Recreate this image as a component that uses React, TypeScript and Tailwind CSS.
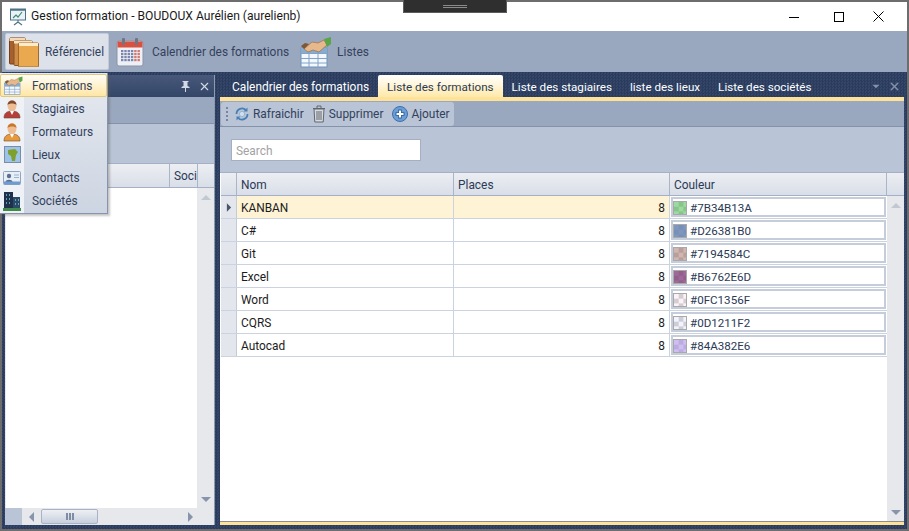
import type { ReactNode } from "react";
import { X } from "lucide-react";

const formations = [
  { name: "KANBAN", places: 8, color: "#7B34B13A" },
  { name: "C#", places: 8, color: "#D26381B0" },
  { name: "Git", places: 8, color: "#7194584C" },
  { name: "Excel", places: 8, color: "#B6762E6D" },
  { name: "Word", places: 8, color: "#0FC1356F" },
  { name: "CQRS", places: 8, color: "#0D1211F2" },
  { name: "Autocad", places: 8, color: "#84A382E6" },
];

const tabs = ["Calendrier des formations", "Liste des formations", "Liste des stagiaires", "liste des lieux", "Liste des sociétés"];

// #AARRGGBB over a white / grey checker
function blend(hex: string, under: number) {
  const a = parseInt(hex.slice(1, 3), 16) / 255;
  const mix = (i: number) => Math.round(parseInt(hex.slice(i, i + 2), 16) * a + under * (1 - a));
  return `rgb(${mix(3)},${mix(5)},${mix(7)})`;
}

function Swatch({ color }: { color: string }) {
  const on = blend(color, 255);
  const off = blend(color, 215);
  return (
    <span
      className="w-[14px] h-[14px] border border-[#a9a9a9] shrink-0"
      style={{ background: `repeating-conic-gradient(${off} 0% 25%, ${on} 0% 50%) 0 0 / 9.4px 9.4px` }}
    />
  );
}

function AppIcon() {
  return (
    <svg width="18" height="18" viewBox="0 0 18 18">
      <rect x="1.5" y="2" width="15" height="10" fill="#eaf2f6" stroke="#4f7386" />
      <path d="M1 1.5h16" stroke="#4f7386" strokeWidth="2" />
      <path d="M4 10l3-3 2 2 4-5" fill="none" stroke="#3e8a7a" strokeWidth="1.2" />
      <path d="M9 12v3M5 17l4-3 4 3" fill="none" stroke="#4f7386" strokeWidth="1.2" />
    </svg>
  );
}

function BooksIcon() {
  return (
    <svg width="30" height="30" viewBox="0 0 30 30">
      <rect x="0.5" y="1" width="16" height="26" rx="1" fill="#a85f2f" stroke="#6f3f1e" />
      <rect x="0.5" y="1" width="16" height="3" fill="#f4d9b4" />
      <rect x="5" y="3.5" width="18" height="25" rx="1" fill="#cf8a45" stroke="#85552a" />
      <rect x="5" y="3.5" width="18" height="3" fill="#f8e3c2" />
      <rect x="9.5" y="6" width="20" height="24" rx="1" fill="#eba94f" stroke="#a06c2e" />
      <rect x="10" y="6" width="19" height="3" fill="#fdebc9" />
    </svg>
  );
}

function CalendarIcon() {
  const cells = [];
  for (let r = 0; r < 4; r++) {
    for (let c = 0; c < 6; c++) {
      cells.push(<rect key={`${r}-${c}`} x={5 + c * 3.3} y={13 + r * 3} width="2.4" height="2.2" fill={c > 3 ? "#d07a70" : "#7c86ad"} />);
    }
  }
  return (
    <svg width="28" height="30" viewBox="0 0 28 30">
      <rect x="1" y="4" width="26" height="25" rx="2" fill="#eef0f6" stroke="#8b93a8" />
      <rect x="1.5" y="4.5" width="25" height="6" fill="#d9503f" />
      <rect x="6" y="1" width="3" height="7" rx="1" fill="#6e7686" />
      <rect x="19" y="1" width="3" height="7" rx="1" fill="#6e7686" />
      {cells}
    </svg>
  );
}

function TableHandsIcon({ size }: { size: number }) {
  return (
    <svg width={size} height={size} viewBox="0 0 32 32">
      <rect x="1" y="12" width="26" height="19" fill="#f4f7fb" stroke="#6b93bd" />
      <rect x="1" y="12" width="26" height="5" fill="#86acd2" />
      <path d="M1 17.5h26M1 22.5h26M1 27h26M9 12v19M18 12v19" stroke="#7fa4ca" />
      <path d="M4 13l8-7 6 1 6-3 3 5-8 7-6-2-5 2z" fill="#e6b98c" stroke="#a6754a" strokeWidth="0.8" />
      <path d="M4 13l5-5-4-1-4 3z" fill="#7f5636" />
      <path d="M24 3l7-2v7l-4 3z" fill="#5aa548" />
    </svg>
  );
}

function MenuIcon({ kind }: { kind: string }) {
  if (kind === "Formations") return <TableHandsIcon size={19} />;
  if (kind === "Stagiaires" || kind === "Formateurs") {
    const body = kind === "Stagiaires" ? "#b5403a" : "#e89a38";
    const hair = kind === "Stagiaires" ? "#7d4a30" : "#c8762a";
    return (
      <svg width="18" height="20" viewBox="0 0 18 20">
        <path d="M1 19c0-5 3-7 8-7s8 2 8 7z" fill={body} stroke="#6b4a3a" strokeWidth="0.6" />
        <path d="M7 12l2 4 2-4z" fill="#fff" />
        <ellipse cx="9" cy="6.5" rx="4.5" ry="5.5" fill="#eebd94" />
        <path d="M4.5 6c0-6 9-6 9 0-2-2-7-2-9 0z" fill={hair} />
      </svg>
    );
  }
  if (kind === "Lieux") {
    return (
      <svg width="17" height="17" viewBox="0 0 17 17">
        <rect x="0.5" y="0.5" width="16" height="16" fill="#9cc4e8" stroke="#7a8ca6" />
        <path d="M4 4l7-1 3 3-2 3-1 6-3 0-1-5-3-2z" fill="#7fa02c" />
      </svg>
    );
  }
  if (kind === "Contacts") {
    return (
      <svg width="18" height="14" viewBox="0 0 18 14">
        <rect x="0.5" y="0.5" width="17" height="13" rx="1" fill="#e8eef6" stroke="#8ea4c0" />
        <circle cx="6" cy="5" r="2.2" fill="#5a6f92" />
        <path d="M2.5 11c0-3 7-3 7 0z" fill="#5a6f92" />
        <path d="M11 4h5M11 6.5h5" stroke="#9cb0ca" />
        <rect x="1" y="10.5" width="16" height="3" fill="#6f9bd0" />
      </svg>
    );
  }
  return (
    <svg width="18" height="20" viewBox="0 0 18 20">
      <rect x="1" y="1" width="9" height="18" fill="#20304a" />
      <rect x="10" y="6" width="7" height="13" fill="#2b4a66" />
      <path d="M3 4h1M6 4h1M3 8h1M6 8h1M3 12h1M6 12h1M12 9h1M15 9h1M12 13h1M15 13h1" stroke="#6fc4e8" strokeWidth="1.6" />
      <rect x="0" y="17" width="18" height="3" fill="#3f8a4a" />
    </svg>
  );
}

function RefreshIcon() {
  return (
    <svg width="16" height="16" viewBox="0 0 16 16" fill="none">
      <path d="M2.5 8a5.5 5.5 0 0 1 9.5-3.8" stroke="#4a7fb5" strokeWidth="1.8" />
      <path d="M13.5 8A5.5 5.5 0 0 1 4 11.8" stroke="#4a7fb5" strokeWidth="1.8" />
      <path d="M13.5 1.5v4h-4zM2.5 14.5v-4h4z" fill="#4a7fb5" />
      <circle cx="8" cy="8" r="2.6" fill="#cfe0f0" stroke="#86a6c6" strokeWidth="0.7" />
    </svg>
  );
}

function TrashIcon() {
  return (
    <svg width="14" height="18" viewBox="0 0 14 18" fill="none" stroke="#5f6670">
      <path d="M1 3.5h12M5 3V1h4v2" />
      <path d="M2 4l.8 13h8.4l.8-13z" fill="#d8dadd" />
      <path d="M5 6v9M7 6v9M9 6v9" />
    </svg>
  );
}

function PlusIcon() {
  return (
    <svg width="16" height="16" viewBox="0 0 16 16">
      <circle cx="8" cy="8" r="7.5" fill="#6c9ed6" stroke="#3f6ea6" />
      <path d="M8 3.5v9M3.5 8h9" stroke="#2f5f98" strokeWidth="3.4" />
      <path d="M8 4.5v7M4.5 8h7" stroke="#fff" strokeWidth="2" />
    </svg>
  );
}

function PinIcon() {
  return (
    <svg width="9" height="11" viewBox="0 0 9 11">
      <path d="M1.5 0h6v1H6.5v4l2 1v1h-8V6l2-1V1h-1z" fill="currentColor" />
      <path d="M4.5 7v4" stroke="currentColor" />
    </svg>
  );
}

function Arrow({ dir, className }: { dir: "up" | "down" | "left" | "right"; className?: string }) {
  const d = { up: "M0 6L5 1l5 5z", down: "M0 1h10L5 6z", left: "M6 0v10L1 5z", right: "M1 0v10l5-5z" }[dir];
  const vertical = dir === "up" || dir === "down";
  return (
    <svg width={vertical ? 10 : 7} height={vertical ? 7 : 10} viewBox={vertical ? "0 0 10 7" : "0 0 7 10"} className={className}>
      <path d={d} fill="currentColor" />
    </svg>
  );
}

function HeaderCell({ children, className }: { children?: ReactNode; className?: string }) {
  return <div className={`flex items-center pl-[4px] pt-[3px] border-r border-[#aab5c8] overflow-hidden whitespace-nowrap ${className ?? ""}`}>{children}</div>;
}

function ToolButton({ icon, label }: { icon: ReactNode; label: string }) {
  return (
    <div className="flex items-center gap-[3px] text-[#33415c]">
      {icon}
      <span className="pt-[1px]">{label}</span>
    </div>
  );
}

function FormationRow({ row, selected }: { row: (typeof formations)[number]; selected: boolean }) {
  return (
    <div className={`flex h-[23px] border-b border-[#ccd3e0] ${selected ? "bg-[#fff3d6]" : "bg-white"}`}>
      <div className="w-[16px] bg-[#e3e6ec] border-r border-[#c3cbd9] flex items-center justify-center text-[#4a5568] shrink-0">
        {selected && <Arrow dir="right" className="w-[6px] h-[9px]" />}
      </div>
      <div className="w-[217px] pl-[4px] pt-[3px] flex items-center border-r border-[#ccd3e0] text-[#1c1c1c]">{row.name}</div>
      <div className="w-[216px] pr-[4px] pt-[3px] flex items-center justify-end border-r border-[#ccd3e0] text-[#1c1c1c]">{row.places}</div>
      <div className="w-[217px] bg-white p-[1px]">
        <div className="h-full border-2 border-[#c5cddb] flex items-center gap-[3px] pt-[1px] text-[#2b3a55]">
          <Swatch color={row.color} />
          <span className="pt-[2px] text-[11.6px]">{row.color}</span>
        </div>
      </div>
    </div>
  );
}

const menuItems = ["Formations", "Stagiaires", "Formateurs", "Lieux", "Contacts", "Sociétés"];

function FlyoutMenu() {
  return (
    <div className="absolute left-0 top-[73px] w-[108px] h-[141px] border-r border-b border-[#8794ab] bg-gradient-to-b from-[#e6e9ef] to-[#cdd5e2] pt-[1px] shadow-[2px_2px_2px_rgba(90,90,90,0.35)]">
      <div className="absolute left-0 top-0 bottom-0 w-[24px] bg-[#eef1f5]" />
      {menuItems.map((item, i) => (
        <div
          key={item}
          className={`relative flex items-center h-[23px] text-[#33415c] ${i === 0 ? "rounded-[2px] border border-[#e3c878] bg-gradient-to-b from-[#fffdf6] to-[#ffe6a4]" : ""}`}
        >
          <div className="w-[24px] flex justify-center shrink-0">
            <MenuIcon kind={item} />
          </div>
          <span className={`pt-[2px] ${i === 0 ? "ml-[7px]" : "ml-[8px]"}`}>{item}</span>
        </div>
      ))}
    </div>
  );
}

export default function App() {
  return (
    <div className="relative w-[909px] h-[531px] overflow-hidden bg-[#6d6d6d] p-[2px] flex flex-col text-[11.9px] font-['Roboto','Noto_Sans',sans-serif]">
      {/* remote desktop handle */}
      <div className="absolute left-[403px] top-0 w-[104px] h-[13px] bg-[#2f2f2f] border-x border-b border-[#5c5c5c] flex flex-col items-center justify-center gap-[1px]">
        <div className="w-[24px] h-[1px] bg-[#8a8a8a]" />
        <div className="w-[24px] h-[1px] bg-[#8a8a8a]" />
      </div>

      <div className="h-[29px] bg-white flex items-center shrink-0">
        <div className="ml-[7px] w-[18px]">
          <AppIcon />
        </div>
        <span className="ml-[4px] text-[12.1px] text-[#1a1a1a]">Gestion formation - BOUDOUX Aurélien (aurelienb)</span>
        <div className="ml-auto pr-[1px] flex items-center text-black">
          <div className="w-[45px] flex justify-center">
            <svg width="10" height="10" viewBox="0 0 10 10">
              <path d="M0 5.5h10" stroke="currentColor" />
            </svg>
          </div>
          <div className="w-[45px] flex justify-center">
            <svg width="10" height="10" viewBox="0 0 10 10">
              <rect x="0.5" y="0.5" width="9" height="9" fill="none" stroke="currentColor" />
            </svg>
          </div>
          <div className="w-[45px] pr-[10px] flex justify-center">
            <svg width="11" height="11" viewBox="0 0 11 11">
              <path d="M0.5 0.5l10 10M10.5 0.5l-10 10" stroke="currentColor" />
            </svg>
          </div>
        </div>
      </div>

      <div className="h-[41px] bg-[#9aa8bf] flex items-center pl-[3px] text-[#33415c] shrink-0">
        <div className="w-[104px] h-[37px] flex items-center bg-[#dde2ea] border border-[#c3cbd8] rounded-[2px] pl-[3px]">
          <BooksIcon />
          <span className="ml-[6px] pt-[3px]">Référenciel</span>
        </div>
        <div className="ml-[7px]">
          <CalendarIcon />
        </div>
        <span className="ml-[8px] pt-[3px]">Calendrier des formations</span>
        <div className="ml-[11px]">
          <TableHandsIcon size={32} />
        </div>
        <span className="ml-[5px] pt-[3px]">Listes</span>
      </div>

      <div className="flex-1 min-h-0 flex gap-[5px] pl-[3px] pr-[3px] pt-[3px] pb-[4px] bg-[repeating-conic-gradient(#2a3b5d_0%_25%,#344769_0%_50%)] bg-[length:3px_3px]">
        {/* left pane */}
        <div className="w-[210px] flex flex-col border-r border-[#8d99ad]">
          <div className="h-[22px] bg-gradient-to-b from-[#47587a] to-[#344667] flex items-center justify-end gap-[8px] pr-[3px] text-[#d5dbe6] shrink-0">
            <PinIcon />
            <X size={13} />
          </div>
          <div className="h-[27px] bg-[#9aa8bf] border-b border-[#8592aa] shrink-0" />
          <div className="h-[40px] bg-[#b9c5d6] border-b border-[#a4b0c5] shrink-0" />
          <div className="h-[24px] flex bg-gradient-to-b from-[#eceef2] to-[#d9dee8] border-b border-[#a4b0c5] text-[#2b3a55] shrink-0">
            <HeaderCell className="w-[165px]" />
            <HeaderCell className="w-[28px]">Soci</HeaderCell>
          </div>
          <div className="flex-1 min-h-0 flex bg-[#e6e8ec]">
            <div className="w-[192px] flex flex-col pl-[1px]">
              <div className="flex-1 bg-white" />
              <div className="h-[17px] flex items-center -ml-[1px] text-[#8794ab] shrink-0">
                <div className="w-[17px] h-full bg-[#b9c5d6]" />
                <Arrow dir="left" className="ml-[6px]" />
                <div className="ml-[6px] w-[57px] h-[15px] rounded-[2px] border border-[#a9b3c4] bg-gradient-to-b from-[#eef0f4] to-[#c8d0de] flex items-center justify-center gap-[1px]">
                  <div className="w-[2px] h-[7px] bg-[#7f8ca6]" />
                  <div className="w-[2px] h-[7px] bg-[#7f8ca6]" />
                  <div className="w-[2px] h-[7px] bg-[#7f8ca6]" />
                </div>
                <Arrow dir="right" className="ml-[89px]" />
              </div>
            </div>
            <div className="flex-1 flex flex-col items-center justify-between pt-[6px] pb-[22px] text-[#8794ab]">
              <Arrow dir="up" className="text-[#c2c8d2]" />
              <Arrow dir="down" />
            </div>
          </div>
        </div>

        {/* document pane */}
        <div className="w-[684px] flex flex-col">
          <div className="h-[22px] flex pl-[3px] text-white shrink-0">
            {tabs.map((tab, i) => (
              <div
                key={tab}
                className={`px-[9px] pt-[3px] flex items-center ${i > 0 ? "text-[11.65px]" : ""} ${i === 1 ? "text-[#2b3a55] rounded-t-[2px] bg-gradient-to-b from-white to-[#ffe9a8]" : ""}`}
              >
                {tab}
              </div>
            ))}
            <div className="ml-auto flex items-center gap-[8px] pr-[3px] text-[#8391aa]">
              <Arrow dir="down" className="w-[8px] h-[5px]" />
              <X size={13} strokeWidth={2.5} />
            </div>
          </div>
          <div className="h-[4px] bg-[#ffe29a] shrink-0" />

          <div className="h-[26px] bg-[#9aa8bf] border-b border-[#8592aa] pl-[1px] pt-[1px] flex items-start shrink-0">
            <div className="h-[24px] w-[233px] bg-[#b9c5d6] rounded-[3px] flex items-center pl-[5px]">
              <div className="w-[2px] h-[14px] border-l-2 border-dotted border-[#78859c]" />
              <div className="ml-[6px]">
                <ToolButton icon={<RefreshIcon />} label="Rafraichir" />
              </div>
              <div className="ml-[8px]">
                <ToolButton icon={<TrashIcon />} label="Supprimer" />
              </div>
              <div className="ml-[9px]">
                <ToolButton icon={<PlusIcon />} label="Ajouter" />
              </div>
            </div>
          </div>

          <div className="h-[46px] bg-[#b9c5d6] border-b border-[#a4b0c5] flex items-center pl-[11px] shrink-0">
            <input
              placeholder="Search"
              className="w-[190px] h-[22px] bg-white border border-[#a4afc2] pl-[4px] pt-[2px] outline-none placeholder:text-[#a3a3a3]"
            />
          </div>

          <div className="flex-1 min-h-0 flex">
            <div className="flex-1 flex flex-col bg-white pl-[1px]">
              <div className="h-[23px] flex bg-gradient-to-b from-[#eceef2] to-[#d9dee8] border-b border-[#a4b0c5] text-[#2b3a55] shrink-0">
                <HeaderCell className="w-[16px]" />
                <HeaderCell className="w-[217px]">Nom</HeaderCell>
                <HeaderCell className="w-[216px]">Places</HeaderCell>
                <HeaderCell className="w-[217px]">Couleur</HeaderCell>
              </div>
              {formations.map((row, i) => (
                <FormationRow key={row.name} row={row} selected={i === 0} />
              ))}
            </div>
            <div className="w-[17px] flex flex-col items-center bg-[#e6e8ec] text-[#8794ab] pb-[5px]">
              <div className="w-full h-[23px] bg-gradient-to-b from-[#eceef2] to-[#d9dee8] border-b border-[#a4b0c5]" />
              <Arrow dir="up" className="mt-[6px] text-[#c2c8d2]" />
              <Arrow dir="down" className="mt-auto" />
            </div>
          </div>
          <div className="h-[4px] bg-[#ffe29a] border-t border-[#8d8d8d] shrink-0" />
        </div>
      </div>

      <FlyoutMenu />
    </div>
  );
}
